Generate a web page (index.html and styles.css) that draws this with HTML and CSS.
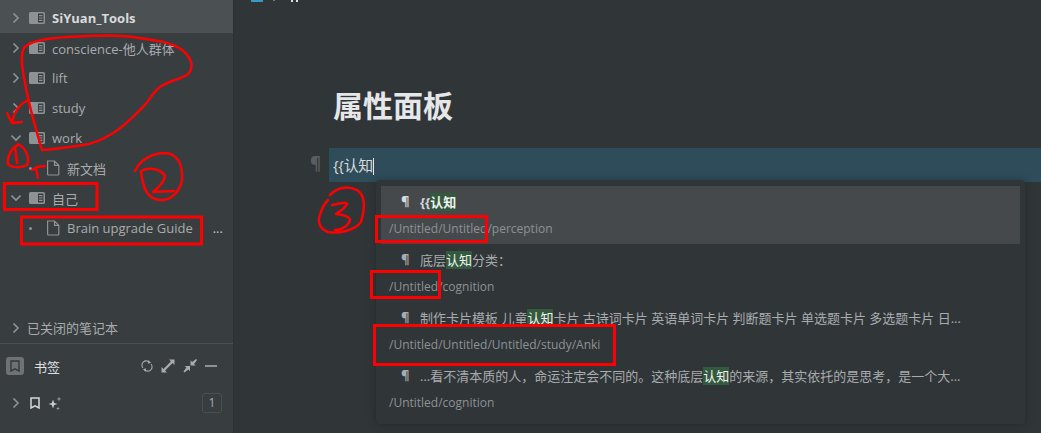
FILE: index.html
```html
<!DOCTYPE html>
<html lang="zh-CN">
<head>
    <meta charset="UTF-8">
    <title>SiYuan</title>
    <link rel="stylesheet" href="styles.css">
</head>
<body>

<svg class="defs" width="0" height="0">
    <symbol id="iconBook" viewBox="0 0 16 12">
        <path fill="#8e9294" d="M1.5 0H14.5A1.5 1.5 0 0 1 16 1.5V10.500A1.500 1.500 0 0 1 14.500 12H1.500A1.500 1.500 0 0 1 0 10.500V1.500A1.500 1.500 0 0 1 1.500 0Z"/>
        <path fill="#3a3f42" d="M9 1.500H14.500V10.500H9Z"/>
        <path fill="#8e9294" d="M10 3H13.500V4.200H10ZM10 5.400H13.500V6.600H10ZM10 7.800H13.500V9H10Z"/>
    </symbol>
    <symbol id="iconFile" viewBox="0 0 14 16">
        <path fill="none" stroke="#8e9294" stroke-width="1.200" d="M1.600 1H8.500L12.800 5.300V14A1 1 0 0 1 11.800 15H2.600A1 1 0 0 1 1.600 14ZM8.500 1V5.300H12.800"/>
    </symbol>
    <symbol id="iconRight" viewBox="0 0 10 10">
        <path fill="none" stroke="#8e9294" stroke-width="1.600" d="M2.500 0.500L7 5L2.500 9.500"/>
    </symbol>
    <symbol id="iconDown" viewBox="0 0 10 10">
        <path fill="none" stroke="#8e9294" stroke-width="1.600" d="M0.500 2.500L5 7L9.500 2.500"/>
    </symbol>
</svg>

<div class="app">
    <aside class="sidebar">
        <div class="tree">
            <div class="row row-top">
                <svg class="arrow"><use href="#iconRight"/></svg>
                <svg class="book"><use href="#iconBook"/></svg>
                <span class="name name-bold">SiYuan_Tools</span>
            </div>
            <div class="row">
                <svg class="arrow"><use href="#iconRight"/></svg>
                <svg class="book"><use href="#iconBook"/></svg>
                <span class="name">conscience-他人群体</span>
            </div>
            <div class="row">
                <svg class="arrow"><use href="#iconRight"/></svg>
                <svg class="book"><use href="#iconBook"/></svg>
                <span class="name">lift</span>
            </div>
            <div class="row">
                <svg class="arrow"><use href="#iconRight"/></svg>
                <svg class="book"><use href="#iconBook"/></svg>
                <span class="name">study</span>
            </div>
            <div class="row">
                <svg class="arrow"><use href="#iconDown"/></svg>
                <svg class="book"><use href="#iconBook"/></svg>
                <span class="name">work</span>
            </div>
            <div class="row row-doc">
                <span class="dot"></span>
                <svg class="file"><use href="#iconFile"/></svg>
                <span class="name">新文档</span>
            </div>
            <div class="row">
                <svg class="arrow"><use href="#iconDown"/></svg>
                <svg class="book"><use href="#iconBook"/></svg>
                <span class="name">自己</span>
            </div>
            <div class="row row-doc">
                <span class="dot"></span>
                <svg class="file"><use href="#iconFile"/></svg>
                <span class="name">Brain upgrade Guide</span>
                <span class="more">...</span>
            </div>
        </div>

        <div class="row row-closed">
            <svg class="arrow"><use href="#iconRight"/></svg>
            <span class="closed-name">已关闭的笔记本</span>
        </div>

        <div class="bookmarks">
            <div class="bm-head">
                <span class="bm-badge">
                    <svg width="10" height="12" viewBox="0 0 10 12"><path fill="none" stroke="#33383b" stroke-width="1.400" d="M1 1H9V11L5 8.800L1 11Z"/></svg>
                </span>
                <span class="bm-title">书签</span>
                <span class="bm-tools">
                    <svg width="12" height="12" viewBox="0 0 12 12"><path fill="none" stroke="#a9acae" stroke-width="1.100" d="M2 8A4.300 4.300 0 0 1 8.500 2.300M10 4A4.300 4.300 0 0 1 3.500 9.700"/><path fill="#a9acae" d="M7.500 0.300L10 2.800L6.800 3.800ZM4.500 11.700L2 9.200L5.200 8.200Z"/></svg>
                    <svg width="14" height="14" viewBox="0 0 14 14"><path fill="#a9acae" d="M0.500 13.500V8L2.400 9.900L9.900 2.400L8 0.500H13.500V6L11.600 4.100L4.100 11.600L6 13.500Z"/></svg>
                    <svg width="14" height="14" viewBox="0 0 14 14"><path fill="#a9acae" d="M7 7H1.800L3.400 8.600L0.500 12.600L1.400 13.500L5.400 10.600L7 12.200ZM7.500 6.500V1.300L9.100 2.900L13.100 0L14 0.900L11.100 4.900L12.700 6.500Z"/></svg>
                    <span class="bm-minus"></span>
                </span>
            </div>
            <div class="bm-row">
                <svg class="arrow"><use href="#iconRight"/></svg>
                <svg class="bm-mark" width="10" height="12" viewBox="0 0 10 12"><path fill="none" stroke="#d6d8d9" stroke-width="1.500" d="M1 1H9V11L5 8.800L1 11Z"/></svg>
                <svg class="bm-spark" width="14" height="15" viewBox="0 0 14 15"><path fill="#c9ccce" d="M5 3.500L6.200 7L9.500 8L6.200 9L5 12.500L3.800 9L0.500 8L3.800 7Z"/><path fill="#9aa0a5" d="M11 0.500L11.600 2.400L13.500 3L11.600 3.600L11 5.500L10.400 3.600L8.500 3L10.400 2.400ZM10 10.500L10.500 12L12 12.500L10.500 13L10 14.500L9.500 13L8 12.500L9.500 12Z"/></svg>
                <span class="bm-count">1</span>
            </div>
        </div>
    </aside>

    <main class="editor">
        <div class="crumbs">
            <span class="crumb-icon"></span>
            <span class="crumb-dot"></span>
            <span class="crumb-pause"></span>
        </div>
        <h1 class="doc-title">属性面板</h1>
        <div class="block">
            <span class="pilcrow">¶</span>
            <div class="block-text">{{认知<span class="caret"></span></div>
        </div>

        <div class="hint">
            <div class="hint-item hint-current">
                <div class="hint-line hint-bold"><span class="hint-mark">¶</span><span class="hint-text">{{<mark>认知</mark></span></div>
                <div class="hint-path">/Untitled/Untitled/perception</div>
            </div>
            <div class="hint-item">
                <div class="hint-line"><span class="hint-mark">¶</span><span class="hint-text">底层<mark>认知</mark>分类：</span></div>
                <div class="hint-path">/Untitled/cognition</div>
            </div>
            <div class="hint-item">
                <div class="hint-line"><span class="hint-mark">¶</span><span class="hint-text">制作卡片模板 儿童<mark>认知</mark>卡片 古诗词卡片 英语单词卡片 判断题卡片 单选题卡片 多选题卡片 日...</span></div>
                <div class="hint-path">/Untitled/Untitled/Untitled/study/Anki</div>
            </div>
            <div class="hint-item">
                <div class="hint-line"><span class="hint-mark">¶</span><span class="hint-text">...看不清本质的人，命运注定会不同的。这种底层<mark>认知</mark>的来源，其实依托的是思考，是一个大...</span></div>
                <div class="hint-path">/Untitled/cognition</div>
            </div>
        </div>
    </main>
</div>

<!-- red marks drawn over the screenshot -->
<svg class="marks" width="1041" height="433" viewBox="0 0 1041 433">
    <g fill="none" stroke="#f00" stroke-width="3">
        <rect x="4.500" y="183.500" width="92.500" height="26"/>
        <rect x="21.500" y="217" width="180" height="27"/>
        <rect x="376.500" y="216.500" width="110" height="25"/>
        <rect x="371.500" y="271.500" width="68" height="26"/>
        <rect x="374.500" y="325.500" width="240" height="39"/>
    </g>
    <g fill="none" stroke="#f00" stroke-width="2.500" stroke-linecap="round" stroke-linejoin="round">
        <path d="M42 150C36 130 28 100 25 83C22 68 20 55 24 48C30 40 50 38 67 37C95 35 120 35 133 37C155 40 172 42 182 50C192 58 195 68 187 75C178 80 168 81 160 87C152 93 150 100 143 107C132 118 124 127 113 133C102 140 92 144 83 145C70 147 55 149 43 150"/>
        <path d="M28 100C20 104 14 112 12 122M7 113L12 123L22 122"/>
        <path d="M18 145C11 148 7 157 8 164C11 168 22 168 27 165C30 158 26 148 18 144M15 147L17 163"/>
        <path d="M38 178L36 168M32 170L37 167L45 166"/>
        <path d="M135 171C140 160 152 153 165 153C178 154 183 165 182 180C180 192 170 201 160 200C148 199 143 190 141 171"/>
        <path d="M143 170C150 168 160 168 165 176C164 183 158 188 153 192L174 191"/>
        <path d="M330 195C338 187 348 186 357 190C365 195 366 205 361 222C355 230 340 234 328 232C320 229 317 222 320 215C322 208 325 203 328 200"/>
        <path d="M332 205C340 203 347 202 347 204C344 210 338 212 336 214C342 214 350 217 350 220C348 227 340 230 335 230"/>
    </g>
</svg>

</body>
</html>
```

FILE: styles.css
```css
* {
    box-sizing: border-box;
}
html, body {
    margin: 0;
    height: 100%;
    overflow: hidden;
}
body {
    font-family: "Open Sans", "Noto Sans CJK SC", sans-serif;
    font-size: 13px;
    color: #a9acae;
    background-color: #303538;
}
.defs {
    display: none;
}
.app {
    display: flex;
    height: 433px;
}

/* sidebar */
.sidebar {
    width: 234px;
    flex-shrink: 0;
    display: flex;
    flex-direction: column;
    background-color: #383d40;
    border-right: 1px solid #2e3235;
}
.tree {
    flex: 1;
}
.row {
    display: flex;
    align-items: center;
    height: 30px;
    padding-left: 11px;
}
.row-top {
    height: 33px;
    padding-top: 3px;
    background-color: #4b5053;
}
.row-doc {
    padding-left: 29px;
}
.row-closed {
    height: 29px;
    margin-bottom: 1px;
}
.arrow {
    width: 10px;
    height: 10px;
    flex-shrink: 0;
}
.book {
    width: 16px;
    height: 12px;
    margin-left: 8px;
    flex-shrink: 0;
}
.file {
    width: 14px;
    height: 16px;
    margin-left: 14px;
    flex-shrink: 0;
}
.dot {
    width: 3px;
    height: 3px;
    border-radius: 50%;
    background-color: #8e9294;
}
.name {
    margin-left: 7px;
    white-space: nowrap;
}
.name-bold {
    font-weight: 700;
    color: #d8dadb;
}
.more {
    margin-left: 20px;
    color: #c4c6c8;
}
.closed-name {
    margin-left: 6px;
}
.bookmarks {
    height: 90px;
    border-top: 1px solid #4b4f52;
}
.bm-head {
    display: flex;
    align-items: center;
    height: 44px;
    padding: 0 6px;
}
.bm-badge {
    display: flex;
    align-items: center;
    justify-content: center;
    width: 18px;
    height: 18px;
    border-radius: 3px;
    background-color: #6e7274;
}
.bm-title {
    margin-left: 10px;
    color: #dfe1e2;
}
.bm-tools {
    display: flex;
    align-items: center;
    gap: 8px;
    margin-left: auto;
    margin-right: 10px;
}
.bm-minus {
    width: 12px;
    height: 2px;
    background-color: #8e9294;
}
.bm-row {
    display: flex;
    align-items: center;
    height: 30px;
    padding-left: 11px;
}
.bm-mark {
    margin-left: 9px;
}
.bm-spark {
    margin-left: 8px;
}
.bm-count {
    margin-left: auto;
    margin-right: 11px;
    width: 20px;
    height: 20px;
    line-height: 18px;
    text-align: center;
    font-size: 12px;
    border: 1px solid #4b5053;
    border-radius: 3px;
}

/* editor */
.editor {
    flex: 1;
    position: relative;
    min-width: 0;
    padding-left: 95px;
}
.crumbs {
    display: flex;
    align-items: flex-start;
    height: 88px;
    margin-left: -78px;
}
.crumb-icon {
    width: 12px;
    height: 2px;
    background-color: #3b97c4;
}
.crumb-dot {
    width: 2px;
    height: 1px;
    margin-left: 10px;
    background-color: #777;
}
.crumb-pause {
    width: 7px;
    height: 2px;
    margin-left: 16px;
    border-left: 2px solid #ddd;
    border-right: 2px solid #ddd;
}
.doc-title {
    margin: 0 0 0 4px;
    height: 60px;
    line-height: 36px;
    font-size: 30px;
    font-weight: 700;
    color: #e6e7e8;
}
.block {
    position: relative;
    height: 34px;
    background-color: #2f4c5a;
}
.pilcrow {
    position: absolute;
    left: -19px;
    top: 4px;
    font-size: 17px;
    font-weight: 700;
    color: #5a5e61;
}
.block-text {
    padding-left: 4px;
    line-height: 34px;
    font-size: 15px;
    color: #d8dadb;
    letter-spacing: -0.3px;
}
.caret {
    display: inline-block;
    width: 1px;
    height: 17px;
    vertical-align: middle;
    background-color: #e6e7e8;
}

/* search hint */
.hint {
    position: absolute;
    left: 142px;
    top: 180px;
    width: 649px;
    height: 244px;
    padding: 6px 5px;
    background-color: #303538;
    border-radius: 4px;
    box-shadow: 0 0 8px rgba(0, 0, 0, 0.25);
}
.hint-item {
    height: 58px;
}
.hint-current {
    background-color: #45494c;
}
.hint-line {
    display: flex;
    align-items: center;
    height: 30px;
    padding-left: 20px;
    white-space: nowrap;
}
.hint-mark {
    width: 19px;
    font-size: 13px;
    font-weight: 700;
    color: #a9acae;
}
.hint-bold {
    font-weight: 700;
    color: #d8dadb;
}
.hint-bold .hint-mark {
    color: #d8dadb;
}
.hint-path {
    height: 28px;
    padding-left: 8px;
    line-height: 26px;
    font-size: 12px;
    color: #8e9294;
}
mark {
    color: #f0f1f1;
    background-color: #345a3e;
}

/* annotations on top of everything */
.marks {
    position: absolute;
    left: 0;
    top: 0;
    pointer-events: none;
}
```
